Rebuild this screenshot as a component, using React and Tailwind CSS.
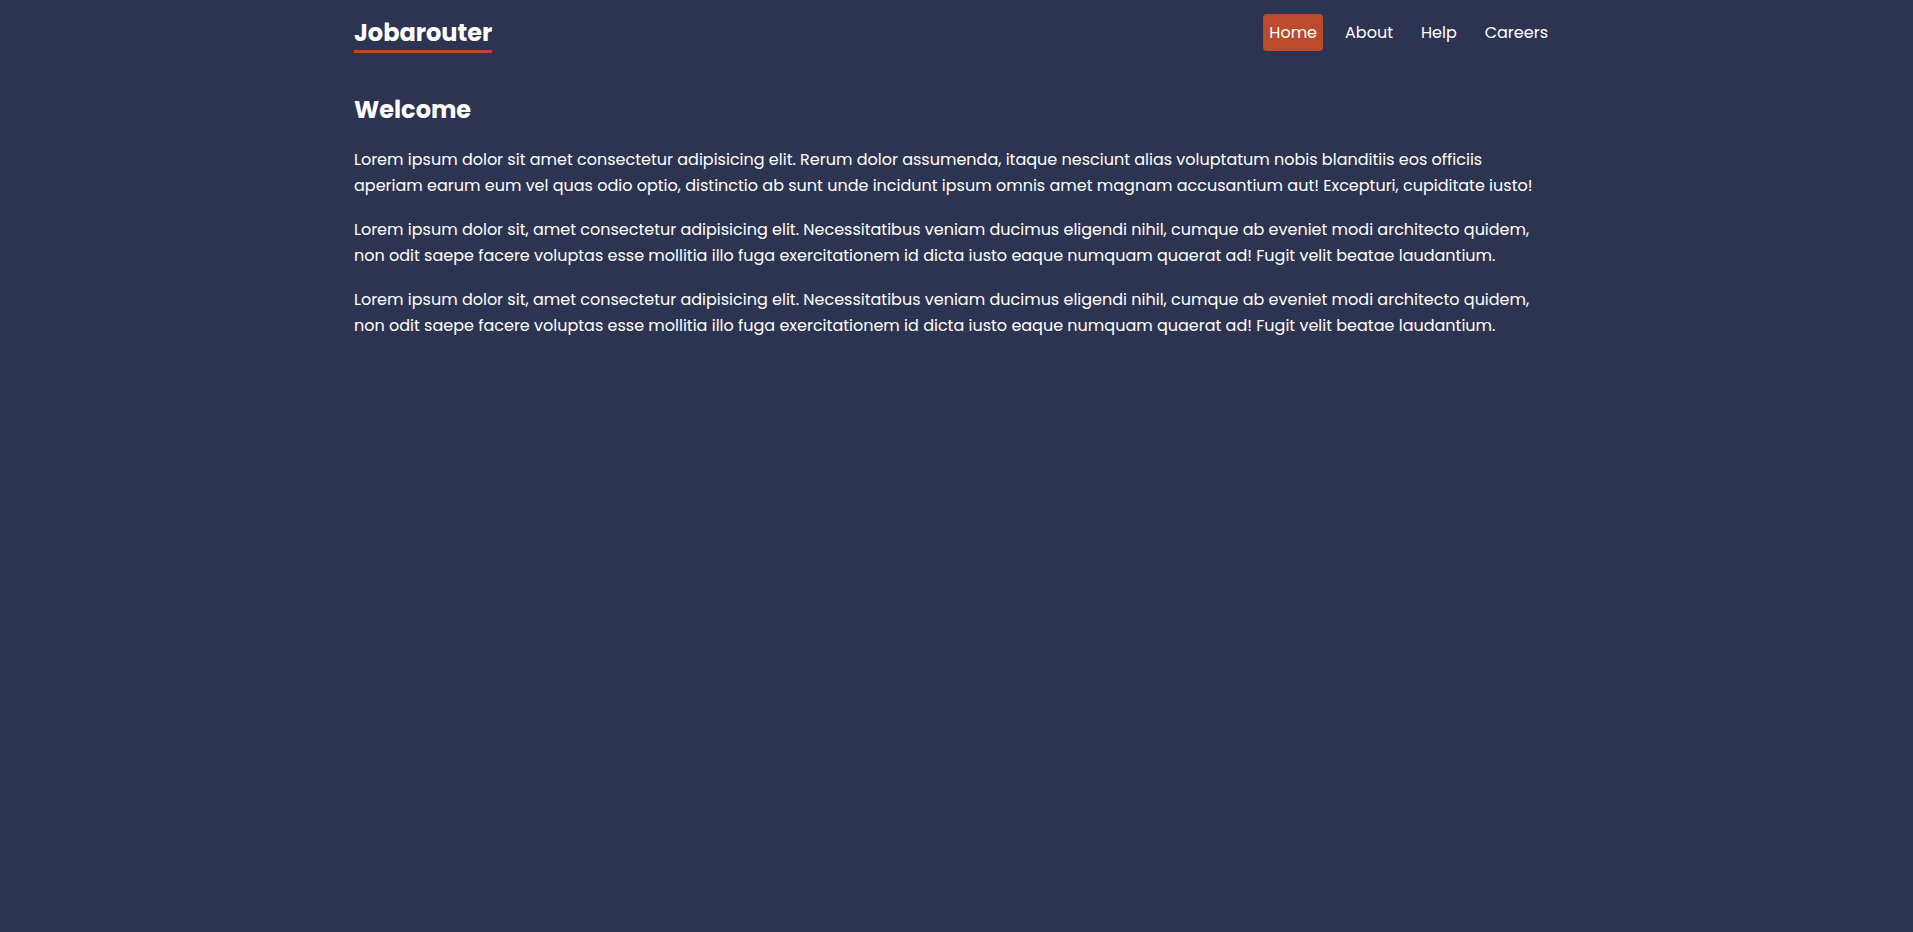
import { useState } from 'react';

const links = ['Home', 'About', 'Help', 'Careers'];

const paragraphs = [
  'Lorem ipsum dolor sit amet consectetur adipisicing elit. Rerum dolor assumenda, itaque nesciunt alias voluptatum nobis blanditiis eos officiis aperiam earum eum vel quas odio optio, distinctio ab sunt unde incidunt ipsum omnis amet magnam accusantium aut! Excepturi, cupiditate iusto!',
  'Lorem ipsum dolor sit, amet consectetur adipisicing elit. Necessitatibus veniam ducimus eligendi nihil, cumque ab eveniet modi architecto quidem, non odit saepe facere voluptas esse mollitia illo fuga exercitationem id dicta iusto eaque numquam quaerat ad! Fugit velit beatae laudantium.',
  'Lorem ipsum dolor sit, amet consectetur adipisicing elit. Necessitatibus veniam ducimus eligendi nihil, cumque ab eveniet modi architecto quidem, non odit saepe facere voluptas esse mollitia illo fuga exercitationem id dicta iusto eaque numquam quaerat ad! Fugit velit beatae laudantium.',
];

export default function App() {
  const [active, setActive] = useState('Home');

  return (
    <div className="min-h-screen bg-[#2d3452] text-white font-['Poppins','Open_Sans',sans-serif]">
      <div className="max-w-[1205px] mx-auto pr-[5px]">
        {/* Navbar */}
        <nav className="flex items-start justify-between pt-[14px] pb-[8px]">
          <h1 className="text-[24px] font-bold leading-none pb-[5px] border-b-[3px] border-[#b5472e] mt-[7px]">
            Jobarouter
          </h1>
          <div className="flex items-center gap-4">
            {links.map((link) => (
              <a
                key={link}
                href="#"
                onClick={(e) => {
                  e.preventDefault();
                  setActive(link);
                }}
                className={
                  'px-[6px] h-[37px] flex items-center rounded text-[16px] ' +
                  (active === link ? 'bg-[#bc4a2c] text-white' : 'text-white')
                }
              >
                {link}
              </a>
            ))}
          </div>
        </nav>

        {/* Content */}
        <main className="pt-[37px]">
          <h2 className="text-[24px] font-bold leading-none mb-[25px]">Welcome</h2>
          {paragraphs.map((p, i) => (
            <p key={i} className="text-[16px] leading-[1.6] mb-[19px]">
              {p}
            </p>
          ))}
        </main>
      </div>
    </div>
  );
}
